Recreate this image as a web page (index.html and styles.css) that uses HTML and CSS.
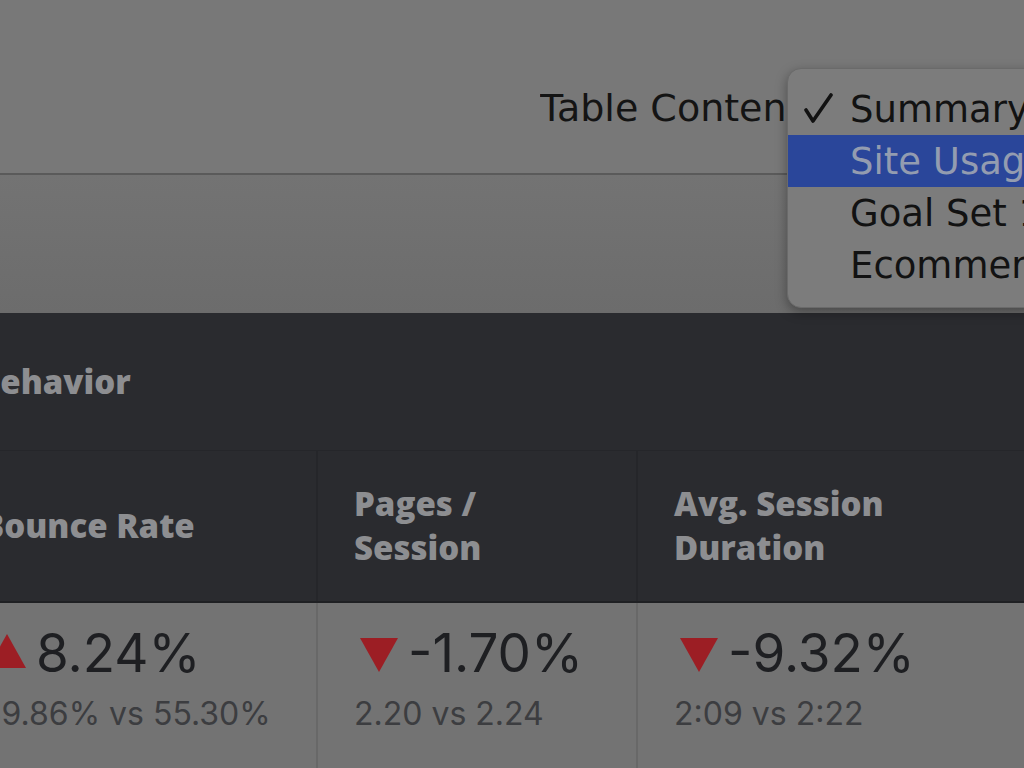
FILE: index.html
```html
<!DOCTYPE html>
<html>
<head>
<meta charset="utf-8">
<link rel="stylesheet" href="styles.css">
</head>
<body>
<div class="page">
  <div class="topbar">
    <div class="label"><span>Table Content:</span></div>
    <div class="menu">
      <div class="item"><span class="check"><svg width="30" height="32" viewBox="0 0 30 32"><path d="M2 17 L9 28 L27 2" fill="none" stroke="#121212" stroke-width="3.6" stroke-linecap="round" stroke-linejoin="round"/></svg></span><span>Summary</span></div>
      <div class="item active"><span class="check"></span><span>Site Usage</span></div>
      <div class="item"><span class="check"></span><span>Goal Set 1</span></div>
      <div class="item"><span class="check"></span><span>Ecommerce</span></div>
    </div>
  </div>
  <div class="band"></div>
  <div class="panel">
    <div class="section-head">Behavior</div>
    <div class="grid heads">
      <div class="cell"><div class="htext">Bounce Rate</div></div>
      <div class="cell"><div class="htext">Pages /<br>Session</div></div>
      <div class="cell"><div class="htext">Avg. Session<br>Duration</div></div>
    </div>
  </div>
  <div class="grid data">
    <div class="cell">
      <div class="big"><span class="tri up"></span>8.24%</div>
      <div class="sub">59.86% vs 55.30%</div>
    </div>
    <div class="cell">
      <div class="big"><span class="tri down"></span>-1.70%</div>
      <div class="sub">2.20 vs 2.24</div>
    </div>
    <div class="cell">
      <div class="big"><span class="tri down"></span>-9.32%</div>
      <div class="sub">2:09 vs 2:22</div>
    </div>
  </div>
</div>
</body>
</html>
```
FILE: styles.css
```css
html, body {
  margin: 0;
  padding: 0;
  background: #737373;
  overflow: hidden;
}
.page {
  width: 1024px;
  height: 768px;
  overflow: hidden;
  position: relative;
}
.topbar {
  height: 173px;
  background: #787878;
  border-bottom: 2px solid #5a5a5a;
  position: relative;
}
.label {
  position: absolute;
  left: 540px;
  top: 86px;
  width: 247px;
  overflow: hidden;
  font-family: "DejaVu Sans", sans-serif;
  font-size: 38px;
  line-height: 44px;
  color: #141414;
  white-space: nowrap;
}
.menu {
  position: absolute;
  left: 787px;
  top: 68px;
  width: 300px;
  padding: 14px 0 16px;
  background: #7c7c7c;
  border: 1px solid #6a6a6a;
  border-radius: 14px;
  box-shadow: 0 4px 12px rgba(0, 0, 0, 0.35);
  font-family: "DejaVu Sans", sans-serif;
  font-size: 37px;
  color: #121212;
}
.item {
  height: 52px;
  display: flex;
  align-items: center;
  white-space: nowrap;
}
.item .check {
  width: 62px;
  height: 32px;
  padding-left: 16px;
  box-sizing: border-box;
  display: flex;
  align-items: center;
}
.item.active {
  background: #2a469a;
  color: #939cb0;
}
.band {
  height: 138px;
  background: linear-gradient(#737373, #6c6c6c);
}
.panel {
  background: #2a2b2f;
}
.section-head {
  height: 137px;
  border-bottom: 1px solid #25262a;
  margin-left: -22px;
  display: flex;
  align-items: center;
  font-family: "Open Sans", sans-serif;
  font-weight: 800;
  font-size: 33px;
  letter-spacing: 0;
  color: #8d8e91;
}
.grid {
  display: grid;
  grid-template-columns: 372px 320px 420px;
  margin-left: -54px;
}
.heads {
  height: 150px;
}
.heads .cell {
  border-right: 2px solid #25262a;
  display: flex;
  align-items: center;
  padding-left: 36px;
}
.heads .cell:last-child {
  border-right: none;
}
.htext {
  font-family: "Open Sans", sans-serif;
  font-weight: 800;
  font-size: 33px;
  line-height: 44px;
  letter-spacing: 0;
  color: #8d8e91;
}
.data {
  border-top: 2px solid #1f2023;
  background: #737373;
  height: 170px;
}
.data .cell {
  border-right: 2px solid #686868;
  padding-left: 36px;
  padding-top: 17px;
}
.data .cell:last-child {
  border-right: none;
}
.big {
  font-family: "Inter", sans-serif;
  font-size: 53px;
  line-height: 66px;
  color: #1e1f22;
  display: flex;
  align-items: center;
}
.tri {
  width: 0;
  height: 0;
  margin-left: 6px;
  margin-right: 10px;
  border-left: 19px solid transparent;
  border-right: 19px solid transparent;
}
.tri.down {
  border-top: 34px solid #9c1e24;
  margin-top: 4px;
}
.tri.up {
  border-bottom: 34px solid #9c1e24;
  margin-top: -4px;
}
.sub {
  font-family: "Inter", sans-serif;
  font-size: 32px;
  line-height: 44px;
  color: #3c3d40;
  margin-top: 6px;
}
```
